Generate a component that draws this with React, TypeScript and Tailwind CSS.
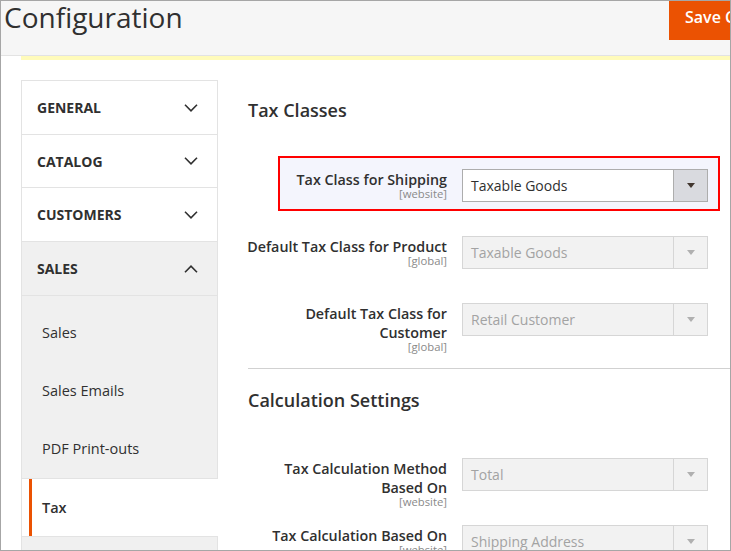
import React from "react";

type FieldProps = {
  label: string;
  scope: string;
  value: string;
  active?: boolean;
  labelClass?: string;
};

const sections = [
  { name: "General", h: "h-[54px]" },
  { name: "Catalog", h: "h-[53px]" },
  { name: "Customers", h: "h-[54px]" },
];
const salesLinks = ["Sales", "Sales Emails", "PDF Print-outs"];

function Chevron({ up }: { up?: boolean }) {
  return (
    <svg width="14" height="8" viewBox="0 0 14 8" fill="none">
      <path
        d={up ? "M1 7.2 7 1.2l6 6" : "M1 0.8l6 6 6-6"}
        stroke="#303030"
        strokeWidth="1.6"
      />
    </svg>
  );
}

function Select({ value, active }: { value: string; active?: boolean }) {
  return (
    <div
      className={`flex h-[33px] w-[246px] shrink-0 border ${
        active ? "border-[#adadad] bg-white text-[#303030]" : "border-[#d6d6d6] bg-[#f2f2f2] text-[#a3a3a3]"
      }`}
    >
      <span className="flex-1 truncate pl-[8px] text-[14px] leading-[31px]">{value}</span>
      <span
        className={`flex w-[34px] items-center justify-center border-l ${
          active ? "border-[#adadad] bg-[#d9dadf]" : "border-[#d6d6d6]"
        }`}
      >
        <svg width="8" height="5" viewBox="0 0 8 5">
          <path d="M0 0h8L4 5z" fill={active ? "#41362f" : "#b0b0b0"} />
        </svg>
      </span>
    </div>
  );
}

function Field({ label, scope, value, active, labelClass = "-ml-[4px] w-[203px]" }: FieldProps) {
  return (
    <div className="flex items-start">
      <div className={`${labelClass} shrink-0 pt-[1px] text-right`}>
        <div className="text-[14.3px] font-semibold leading-[19px] text-[#303030]">{label}</div>
        <div className="-mt-[1px] text-[11.3px] leading-[12px] text-[#8a8a8a]">{scope}</div>
      </div>
      <div className="ml-[15px]">
        <Select value={value} active={active} />
      </div>
    </div>
  );
}

export default function App() {
  return (
    <div className="h-[551px] w-[731px] overflow-hidden border border-[#a6a6a6] bg-white font-['Open_Sans',sans-serif] text-[#303030]">
      {/* page header */}
      <div className="flex h-[55px] border-b border-[#e3e3e3] bg-[#f6f6f6]">
        <h1 className="mt-[2px] w-[668px] shrink-0 pl-[3px] text-[28px] font-normal leading-[28px] text-[#303030]">
          Configuration
        </h1>
        <button className="flex h-[39px] w-[120px] shrink-0 items-start self-start whitespace-nowrap bg-[#eb5202] pl-[16px] pt-[5px] text-[16px] font-semibold leading-[22px] text-white">
          Save Config
        </button>
      </div>
      <div className="ml-[20px] h-[4px] bg-[#fffbbb]" />

      <div className="flex pt-[20px]">
        {/* config tabs */}
        <nav className="ml-[20px] w-[197px] shrink-0 border-l border-[#e3e3e3]">
          {sections.map((s) => (
            <div
              key={s.name}
              className={`flex ${s.h} items-center justify-between border-r border-t border-[#e3e3e3] pl-[15px] pr-[19px]`}
            >
              <span className="text-[14px] font-bold uppercase text-[#303030]">{s.name}</span>
              <Chevron />
            </div>
          ))}
          <div className="flex h-[54px] items-center justify-between border-r border-t border-[#e3e3e3] bg-[#f0f0f0] pl-[15px] pr-[19px]">
            <span className="text-[14px] font-bold uppercase text-[#303030]">Sales</span>
            <Chevron up />
          </div>
          <div className="border-b border-r border-t border-[#e3e3e3] bg-[#f0f0f0] pt-[8px]">
            {salesLinks.map((l) => (
              <div key={l} className="flex h-[58px] items-center pl-[20px] text-[14.5px] text-[#303030]">
                {l}
              </div>
            ))}
          </div>
          <div className="h-[57px] bg-white">
            <div className="ml-[7px] flex h-full items-center border-l-[3px] border-[#eb5202] pl-[10px] text-[14.5px] font-semibold text-[#303030]">
              Tax
            </div>
          </div>
          <div className="h-[40px] border-r border-t border-[#e3e3e3] bg-[#f0f0f0]" />
        </nav>

        {/* tax settings */}
        <div className="ml-[30px] flex-1">
          <h2 className="mt-[18px] text-[18px] font-semibold leading-[24px] text-[#303030]">Tax Classes</h2>

          <div className="ml-[30px] mt-[34px] w-[442px] border-2 border-[#f00] bg-[#f4f5fd] pb-[7px] pr-[10px] pt-[11px]">
            <Field
              label="Tax Class for Shipping"
              scope="[website]"
              value="Taxable Goods"
              active
              labelClass="w-[167px]"
            />
          </div>

          <div className="mt-[25px]">
            <Field label="Default Tax Class for Product" scope="[global]" value="Taxable Goods" />
          </div>
          <div className="mt-[34px]">
            <Field label="Default Tax Class for Customer" scope="[global]" value="Retail Customer" />
          </div>

          <div className="mt-[15px] border-t border-[#d1d1d1]" />

          <h2 className="mt-[19px] text-[18px] font-semibold leading-[24px] text-[#303030]">Calculation Settings</h2>

          <div className="mt-[46px]">
            <Field label="Tax Calculation Method Based On" scope="[website]" value="Total" />
          </div>
          <div className="mt-[17px]">
            <Field label="Tax Calculation Based On" scope="[website]" value="Shipping Address" />
          </div>
        </div>
      </div>
    </div>
  );
}
